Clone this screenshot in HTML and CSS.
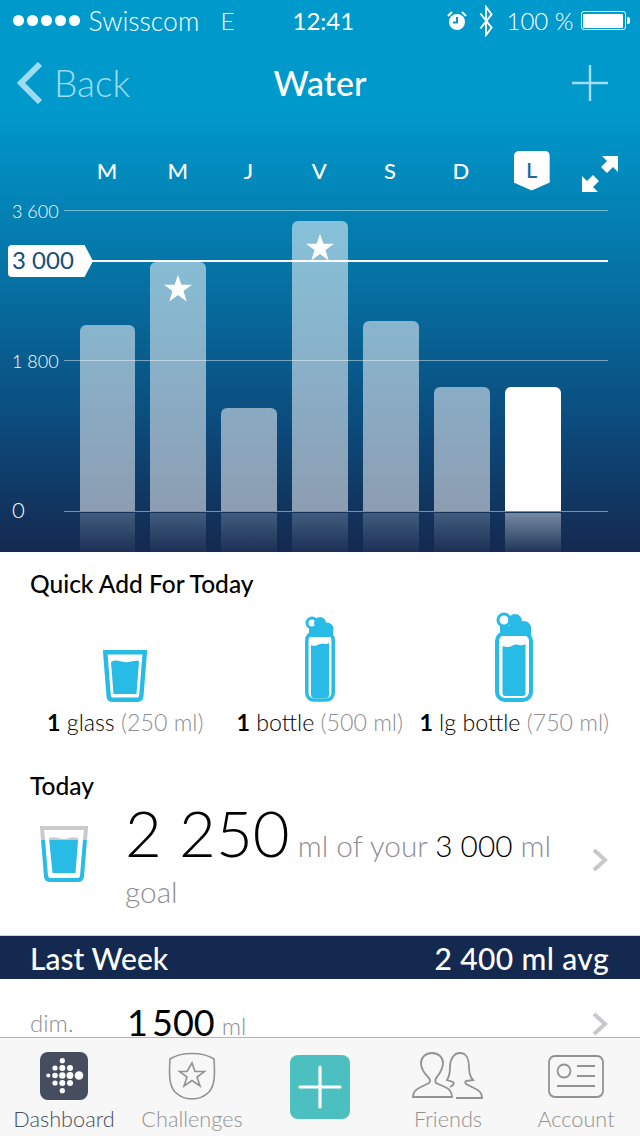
FILE: index.html
```html
<!DOCTYPE html>
<html lang="fr">
<head>
    <meta charset="UTF-8">
    <meta name="viewport" content="width=device-width, initial-scale=1.0">
    <title>Water</title>
    <link rel="stylesheet" href="styles.css">
</head>
<body>
    <div class="screen">
        <main class="content">
            <section class="hero">
                <div class="status">
                    <div class="signal"><i></i><i></i><i></i><i></i><i></i></div>
                    <span class="carrier">Swisscom</span>
                    <span class="network">E</span>
                    <span class="clock">12:41</span>
                    <svg class="alarm" viewBox="0 0 20 20"><circle cx="10" cy="11" r="8" fill="#fff"/><path d="M1 5 5 1M15 1l4 4" stroke="#fff" stroke-width="2" fill="none"/><path d="M10 6v5.5H6" stroke="#0099cc" stroke-width="2" fill="none"/></svg>
                    <svg class="bluetooth" viewBox="0 0 16 34"><path d="M2 9 14 24 8 32V2l6 8L2 25" stroke="#fff" stroke-width="2" fill="none"/></svg>
                    <span class="percent">100 %</span>
                    <div class="battery"><div class="battery-fill"></div></div>
                    <div class="battery-nub"></div>
                </div>

                <div class="nav">
                    <svg class="nav-back-icon" viewBox="0 0 26 42"><path d="M23 2 4 21l19 19" stroke="#9ddcf2" stroke-width="6" fill="none"/></svg>
                    <span class="nav-back">Back</span>
                    <h1 class="nav-title">Water</h1>
                    <svg class="nav-plus" viewBox="0 0 36 36"><path d="M18 0v36M0 18h36" stroke="#a5def2" stroke-width="2.4"/></svg>
                </div>

                <div class="days">
                    <span class="day">M</span>
                    <span class="day">M</span>
                    <span class="day">J</span>
                    <span class="day">V</span>
                    <span class="day">S</span>
                    <span class="day">D</span>
                    <span class="day"><span class="day-today">L</span></span>
                    <svg class="expand" viewBox="0 0 36 36"><path d="M36 0v16l-5-5-6 6-6-6 6-6-5-5zM0 36V20l5 5 6-6 6 6-6 6 5 5z" fill="#fff"/></svg>
                </div>

                <div class="chart">
                    <div class="bars">
                        <div class="bar" style="height:186px"></div>
                        <div class="bar" style="height:249px"><svg class="star" viewBox="0 0 28 27"><path d="M14 0l3.400 9.800H28l-8.500 6.200 3.200 10.400L14 20l-8.700 6.400 3.200-10.400L0 9.800h10.600z" fill="#fff"/></svg></div>
                        <div class="bar" style="height:103px"></div>
                        <div class="bar" style="height:290px"><svg class="star" viewBox="0 0 28 27"><path d="M14 0l3.400 9.800H28l-8.500 6.200 3.200 10.400L14 20l-8.700 6.400 3.200-10.400L0 9.800h10.600z" fill="#fff"/></svg></div>
                        <div class="bar" style="height:190px"></div>
                        <div class="bar" style="height:124px"></div>
                        <div class="bar bar-today" style="height:124px"></div>
                    </div>
                    <div class="mirror">
                        <div class="mirror-bar"></div>
                        <div class="mirror-bar"></div>
                        <div class="mirror-bar"></div>
                        <div class="mirror-bar"></div>
                        <div class="mirror-bar"></div>
                        <div class="mirror-bar"></div>
                        <div class="mirror-bar mirror-today"></div>
                    </div>
                    <div class="grid-line line-top"></div>
                    <div class="grid-line line-mid"></div>
                    <div class="grid-line line-zero"></div>
                    <div class="goal-line"></div>
                    <span class="axis axis-top">3 600</span>
                    <span class="axis axis-mid">1 800</span>
                    <span class="axis axis-zero">0</span>
                    <span class="goal-tag">3 000</span>
                </div>
            </section>

            <section class="quick">
                <h2 class="section-title">Quick Add For Today</h2>
                <div class="quick-row">
                    <div class="quick-item">
                        <svg class="glass" viewBox="0 0 44 52"><path d="M2.200 2.200h39.600l-3.500 44q-.3 3.600-4 3.600H9.700q-3.700 0-4-3.600z" fill="none" stroke="#27bbe6" stroke-width="4.400"/><path d="M8 12c5-3 8-1 13 0s9-2 15-1l-2.500 33h-23z" fill="#27bbe6"/></svg>
                        <p class="quick-label"><b>1</b> glass <span>(250 ml)</span></p>
                    </div>
                    <div class="quick-item">
                        <svg class="bottle" viewBox="0 0 30 87"><circle cx="7" cy="8" r="5" fill="none" stroke="#27bbe6" stroke-width="3"/><circle cx="15" cy="8" r="6" fill="#27bbe6"/><circle cx="22" cy="14" r="6.500" fill="#27bbe6"/><rect x="4" y="12" width="24" height="10" fill="#27bbe6"/><rect x="1.800" y="18" width="26.400" height="67" rx="7" fill="none" stroke="#27bbe6" stroke-width="3.500"/><path d="M6 30c4 2 6 0 9-1s6 1 9-1v52q0 3-3 3H9q-3 0-3-3z" fill="#27bbe6"/></svg>
                        <p class="quick-label"><b>1</b> bottle <span>(500 ml)</span></p>
                    </div>
                    <div class="quick-item">
                        <svg class="bottle-large" viewBox="0 0 38 90"><circle cx="9" cy="8" r="6" fill="none" stroke="#27bbe6" stroke-width="3"/><circle cx="20" cy="9" r="7" fill="#27bbe6"/><circle cx="29" cy="16" r="7" fill="#27bbe6"/><rect x="5" y="14" width="31" height="10" fill="#27bbe6"/><rect x="2" y="21" width="34" height="67" rx="8" fill="none" stroke="#27bbe6" stroke-width="4"/><path d="M7.500 34c5 2 8 1 11-1s8 2 12-1v49q0 3-3 3h-17q-3 0-3-3z" fill="#27bbe6"/></svg>
                        <p class="quick-label"><b>1</b> lg bottle <span>(750 ml)</span></p>
                    </div>
                </div>
            </section>

            <section class="today">
                <h2 class="section-title">Today</h2>
                <div class="today-row">
                    <svg class="today-glass" viewBox="0 0 48 56">
                        <defs>
                            <linearGradient id="level" gradientUnits="userSpaceOnUse" x1="0" y1="0" x2="0" y2="56">
                                <stop offset=".25" stop-color="#c9c9ce"/>
                                <stop offset=".25" stop-color="#27bbe6"/>
                            </linearGradient>
                        </defs>
                        <path d="M2 2h44l-4 48q-.3 4-4.500 4h-27q-4.200 0-4.500-4z" fill="none" stroke="url(#level)" stroke-width="4"/>
                        <path d="M9 12c6-2 10 1 15 1s8-3 14-1v2l-2.500 33h-23z" fill="url(#level)"/>
                    </svg>
                    <p class="today-text"><span class="today-value">2 250</span> ml of your <span class="today-goal">3 000</span> ml goal</p>
                    <svg class="chevron" viewBox="0 0 16 24"><path d="M2 2l11 10L2 22" stroke="#c8c8cd" stroke-width="4" fill="none"/></svg>
                </div>
            </section>

            <div class="week-head">
                <span>Last Week</span>
                <span class="week-avg">2 400 ml avg</span>
            </div>
            <div class="week-row">
                <span class="week-day">dim.</span>
                <span class="week-value">1 500</span>
                <span class="week-unit">ml</span>
                <svg class="chevron week-chevron" viewBox="0 0 16 24"><path d="M2 2l11 10L2 22" stroke="#c8c8cd" stroke-width="4" fill="none"/></svg>
            </div>
        </main>

        <nav class="tabs">
            <div class="tab tab-active">
                <svg class="tab-icon" width="48" height="48" viewBox="0 0 48 48">
                    <rect width="48" height="48" rx="8" fill="#454d5e"/>
                    <g fill="#fff">
                        <circle cx="22.300" cy="8.700" r="2.600"/>
                        <circle cx="15" cy="16" r="2.600"/><circle cx="22.300" cy="16" r="3"/><circle cx="30" cy="16" r="3"/>
                        <circle cx="8.300" cy="23.500" r="2"/><circle cx="15" cy="23.500" r="2.800"/><circle cx="22.300" cy="23.500" r="3.200"/><circle cx="30" cy="23.500" r="3.400"/><circle cx="39" cy="23.500" r="4.300"/>
                        <circle cx="15" cy="31" r="2.600"/><circle cx="22.300" cy="31" r="3"/><circle cx="30" cy="31" r="3"/>
                        <circle cx="22.300" cy="38.700" r="2.600"/>
                    </g>
                </svg>
                <span>Dashboard</span>
            </div>
            <div class="tab">
                <svg class="tab-icon" width="48" height="48" viewBox="0 0 48 48"><path d="M2 7C8 3 16 1.500 24 1.500S40 3 46 7c1 16 1 26-5 33-4 4-11 7-17 7S11 44 7 40C1 33 1 23 2 7z" fill="none" stroke="#929292" stroke-width="1.600"/><path d="M24 11l3 8.500h9.500L29 25l3 9-8-5.500-8 5.500 3-9-7.500-5.500H19z" fill="none" stroke="#929292" stroke-width="1.600"/></svg>
                <span>Challenges</span>
            </div>
            <div class="tab tab-add">
                <svg width="60" height="64" viewBox="0 0 60 64"><rect width="60" height="64" rx="8" fill="#4cc0c0"/><path d="M30 12v40M10 32h40" stroke="#fff" stroke-width="3.200" stroke-linecap="round"/></svg>
            </div>
            <div class="tab">
                <svg class="tab-icon" width="72" height="48" viewBox="22 12 72 48"><path d="M23 57c0-5 3-8 8-10l8-4c2-2 1-4-1-6-4-4-7-8-7-14 0-6 5-10 11-10s11 4 11 10c0 6-3 10-6 14-2 2-2 4-1 6l9 4c5 2 7 5 7 10z" fill="none" stroke="#929292" stroke-width="1.800"/><path d="M66 58h26c0-5-3-8-8-10l-8-4c-1-1-1-2 0-3l7-1c-3-3-4-7-4-13 0-8-3-14-9-14s-10 6-10 14c0 6-1 10-3 13l6 2c1 1 1 2 0 3l-3 2" fill="none" stroke="#929292" stroke-width="1.800"/></svg>
                <span>Friends</span>
            </div>
            <div class="tab">
                <svg class="tab-icon" width="56" height="48" viewBox="0 0 56 48"><rect x="1" y="4" width="54" height="41" rx="6" fill="none" stroke="#929292" stroke-width="1.800"/><circle cx="16" cy="19" r="6.500" fill="none" stroke="#929292" stroke-width="1.800"/><path d="M29 14h18M29 24h18M9 34h38" stroke="#929292" stroke-width="1.800"/></svg>
                <span>Account</span>
            </div>
        </nav>
    </div>
</body>
</html>
```

FILE: styles.css
```css
* {
    box-sizing: border-box;
    margin: 0;
    padding: 0;
}
html, body {
    height: 100%;
    margin: 0;
}
body {
    background-color: #fff;
    color: #000;
    font-family: Lato, "Open Sans", sans-serif;
}
.screen {
    display: flex;
    flex-direction: column;
    height: 1136px;
    overflow: hidden;
    width: 640px;
}
.content {
    flex: 1;
    overflow: hidden;
}

/* blue top part */
.hero {
    background: linear-gradient(#0099cc 0, #0099cc 110px, #0671a3 280px, #0c4c7e 420px, #14294f 552px);
    color: #fff;
    height: 552px;
}
.status {
    align-items: center;
    display: flex;
    font-size: 24px;
    font-weight: 300;
    height: 41px;
    padding-left: 13px;
}
.signal {
    display: flex;
    gap: 3.5px;
    margin-right: 9px;
}
.signal i {
    background: #fff;
    border-radius: 50%;
    display: block;
    height: 10.5px;
    width: 10.5px;
}
.carrier {
    font-size: 26.5px;
    width: 132px;
}
.network {
    width: 72px;
}
.clock {
    font-weight: 400;
    width: 154px;
}
.alarm {
    height: 20px;
    margin-right: 11px;
    width: 20px;
}
.bluetooth {
    height: 32px;
    margin-right: 13px;
    width: 16px;
}
.percent {
    width: 74px;
}
.battery {
    border: 1.5px solid #fff;
    border-radius: 3px;
    height: 19px;
    padding: 1.5px;
    width: 45px;
}
.battery-fill {
    background: #fff;
    border-radius: 1px;
    height: 100%;
}
.battery-nub {
    background: #fff;
    border-radius: 0 2px 2px 0;
    height: 7px;
    margin-left: 1px;
    width: 3px;
}
.nav {
    align-items: center;
    display: flex;
    height: 84px;
    justify-content: space-between;
    padding: 0 32px 0 17px;
    position: relative;
}
.nav-back-icon {
    height: 42px;
    width: 26px;
}
.nav-back {
    color: #9ddcf2;
    flex: 1;
    font-size: 37px;
    font-weight: 300;
    line-height: 40px;
    padding-left: 11px;
}
.nav-title {
    font-size: 34px;
    font-weight: 500;
    left: 0;
    line-height: 40px;
    position: absolute;
    right: 0;
    text-align: center;
}
.nav-plus {
    height: 36px;
    width: 36px;
}
.days {
    align-items: center;
    display: flex;
    height: 75px;
    padding: 16px 0 0 71.5px;
}
.day {
    display: flex;
    font-size: 22px;
    font-weight: 500;
    justify-content: center;
    width: 70.8px;
}
.day-today {
    background: #fff;
    border-radius: 5px 5px 0 0;
    clip-path: polygon(0 0, 100% 0, 100% 80%, 50% 100%, 0 80%);
    color: #1d6a99;
    height: 40px;
    line-height: 38px;
    text-align: center;
    width: 36px;
}
.expand {
    height: 36px;
    margin: 6px 0 0 15px;
    width: 36px;
}

/* chart */
.chart {
    height: 352px;
    position: relative;
}
.bars, .mirror {
    display: flex;
    gap: 15.2px;
    padding-left: 79.6px;
}
.bars {
    align-items: flex-end;
    height: 311px;
}
.mirror {
    height: 39px;
    margin-top: 2px;
}
.bar {
    background: rgba(255, 255, 255, .52);
    border-radius: 6px 6px 0 0;
    display: flex;
    justify-content: center;
    padding-top: 13px;
    width: 55.7px;
}
.bar-today {
    background: #fff;
}
.star {
    height: 27px;
    width: 28px;
}
.mirror-bar {
    background: linear-gradient(rgba(255, 255, 255, .2), rgba(255, 255, 255, .03));
    width: 55.7px;
}
.mirror-today {
    background: linear-gradient(rgba(255, 255, 255, .42), rgba(255, 255, 255, .06));
}
.grid-line {
    background: rgba(255, 255, 255, .45);
    height: 1px;
    left: 64px;
    position: absolute;
    width: 544px;
}
.line-top {
    top: 10px;
}
.line-mid {
    top: 160px;
}
.line-zero {
    top: 311px;
}
.goal-line {
    background: #fff;
    height: 2px;
    left: 90px;
    position: absolute;
    top: 60px;
    width: 518px;
}
.axis {
    font-size: 18px;
    font-weight: 300;
    left: 12px;
    line-height: 22px;
    position: absolute;
}
.axis-top {
    top: 0;
}
.axis-mid {
    top: 150px;
}
.axis-zero {
    font-size: 22px;
    top: 299px;
}
.goal-tag {
    background: #fff;
    border-radius: 4px 0 0 4px;
    clip-path: polygon(0 0, 90% 0, 100% 50%, 90% 100%, 0 100%);
    color: #14507e;
    font-size: 24px;
    font-weight: 400;
    height: 32px;
    left: 8px;
    line-height: 29px;
    padding-left: 4px;
    position: absolute;
    top: 45px;
    width: 85px;
}

/* white part */
.section-title {
    font-size: 24.5px;
    font-weight: 500;
    line-height: 26px;
    padding-left: 30px;
}
.quick {
    padding: 19px 0 37px;
}
.quick-row {
    display: flex;
    padding-left: 28px;
}
.quick-item {
    align-items: center;
    display: flex;
    flex-direction: column;
    height: 139px;
    justify-content: flex-end;
    width: 194.5px;
}
.glass {
    height: 52px;
    width: 44px;
}
.bottle {
    height: 87px;
    width: 30px;
}
.bottle-large {
    height: 90px;
    width: 38px;
}
.quick-label {
    font-size: 23.2px;
    font-weight: 300;
    line-height: 28px;
    margin-top: 6px;
    white-space: nowrap;
}
.quick-label b {
    font-weight: 700;
}
.quick-label span {
    color: #8e8e93;
}
.today-row {
    align-items: flex-start;
    display: flex;
    height: 136px;
    padding: 0 32px 0 40px;
}
.today-glass {
    height: 56px;
    margin-top: 27px;
    width: 48px;
}
.today-text {
    color: #8e8e93;
    flex: 1;
    font-size: 29.8px;
    font-weight: 300;
    line-height: 46px;
    padding: 0 36px 0 37px;
}
.today-value {
    color: #000;
    font-size: 63.5px;
    line-height: 68px;
}
.today-goal {
    color: #000;
}
.chevron {
    flex: none;
    height: 24px;
    width: 16px;
}
.today-row .chevron {
    margin-top: 49px;
}
.week-head {
    background: #14294f;
    border-top: 1px solid #c6d4e3;
    color: #fff;
    display: flex;
    font-size: 30px;
    font-weight: 500;
    height: 44px;
    justify-content: space-between;
    line-height: 44px;
    padding: 0 31px 0 30px;
}
.week-avg {
    letter-spacing: .4px;
}
.week-row {
    align-items: flex-start;
    display: flex;
    height: 58px;
    padding: 0 32px 0 30px;
}
.week-day {
    color: #8e8e93;
    font-size: 24px;
    font-weight: 300;
    line-height: 28px;
    margin-top: 30px;
    width: 97px;
}
.week-value {
    font-size: 36px;
    line-height: 40px;
    margin: 23px 7px 0 0;
    word-spacing: -5px;
}
.week-unit {
    color: #8e8e93;
    flex: 1;
    font-size: 24px;
    font-weight: 300;
    line-height: 24px;
    margin-top: 35px;
}
.week-chevron {
    margin-top: 33px;
}

/* bottom tabs */
.tabs {
    background: #f7f7f7;
    border-top: 1px solid #b5b5b5;
    display: flex;
    flex: none;
    height: 99px;
    padding: 14px 0 0;
}
.tab {
    align-items: center;
    color: #929292;
    display: flex;
    flex-direction: column;
    font-size: 21.7px;
    font-weight: 300;
    width: 128px;
}
.tab-active {
    color: #454d5e;
}
.tab-icon {
    margin-bottom: 6px;
}
.tab-add {
    padding-top: 3px;
}
```
